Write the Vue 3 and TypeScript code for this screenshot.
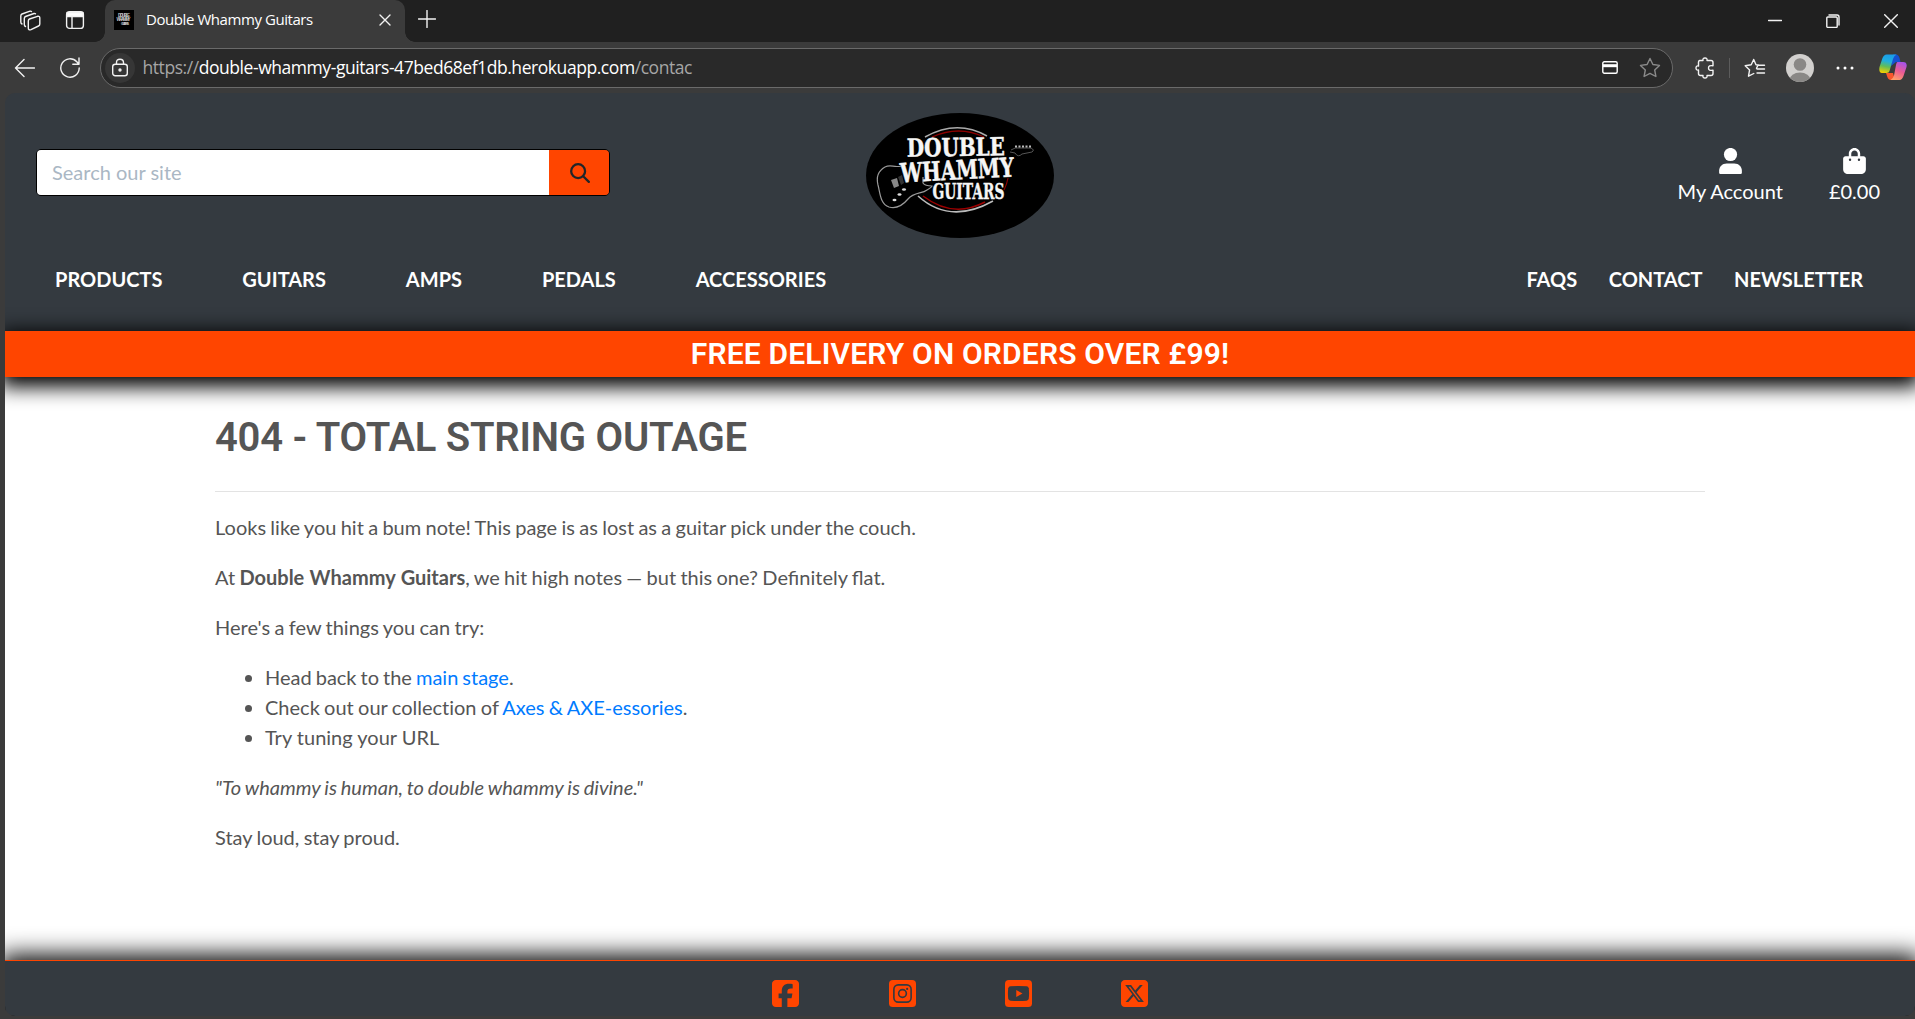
<script setup lang="ts">
interface NavItem { label: string }

const shopLinks: NavItem[] = [
  { label: 'PRODUCTS' },
  { label: 'GUITARS' },
  { label: 'AMPS' },
  { label: 'PEDALS' },
  { label: 'ACCESSORIES' },
]
const infoLinks: NavItem[] = [
  { label: 'FAQS' },
  { label: 'CONTACT' },
  { label: 'NEWSLETTER' },
]
</script>

<template>
  <div class="window">
    <div class="tabstrip">
      <svg class="ic workspaces" width="24" height="24" viewBox="0 0 24 24">
        <path d="M10.500 10 18.500 7.300Q20.800 6.800 20.800 9V15Q20.800 16.500 19.500 17L12 20.700Q9.300 21.500 9.300 19V12Q9.300 10.500 10.500 10Z" />
        <path d="M6.500 17.500Q5.300 17 5.300 15.500V9.500Q5.300 8 6.500 7.500L15 4.500Q16 4.300 16.500 4.800" />
        <path d="M3 15Q1.800 14.500 1.800 13V7Q1.800 5.500 3 5L11 2.200Q12 2 12.500 2.500" />
      </svg>
      <svg class="ic vtabs" width="20" height="20" viewBox="0 0 20 20">
        <rect x="1.600" y="1.600" width="16.800" height="16.800" rx="3" />
        <path d="M2 2.500H18V6.500H2Z" fill="#fff" /><path d="M7 6V18" />
      </svg>
      <div class="tab">
        <svg class="favicon" width="20" height="20" viewBox="0 0 20 20">
          <rect width="20" height="20" fill="#000" />
          <g fill="#c8c8c8" font-family="Liberation Sans, sans-serif" font-weight="700" text-anchor="middle">
            <text x="10" y="7" font-size="4.500" textLength="12">DOUBLE</text>
            <text x="9.500" y="11" font-size="4.500" textLength="14">WHAMMY</text>
            <text x="11" y="14.500" font-size="3.500" textLength="8">GUITARS</text>
          </g>
        </svg>
        <span class="tab-title">Double Whammy Guitars</span>
        <svg class="ic" width="12" height="12" viewBox="0 0 12 12"><path d="M1 1 11 11M11 1 1 11" /></svg>
      </div>
      <svg class="ic plus" width="18" height="18" viewBox="0 0 18 18"><path d="M9 .5V17.500M.5 9H17.500" /></svg>
      <div class="controls">
        <svg class="ic" width="14" height="14" viewBox="0 0 14 14"><path d="M.5 6.500H13.500" /></svg>
        <svg class="ic" width="14" height="14" viewBox="0 0 14 14">
          <rect x=".8" y="3" width="10.400" height="10.400" rx="1" /><path d="M3 1H11Q13 1 13 3V11" />
        </svg>
        <svg class="ic" width="14" height="14" viewBox="0 0 14 14"><path d="M.7.7 13.300 13.300M13.300.7.7 13.300" /></svg>
      </div>
    </div>

    <div class="toolbar">
      <svg class="ic back" width="21" height="20" viewBox="0 0 21 20"><path d="M10 1.500 1.500 10 10 18.500M1.500 10H20.500" /></svg>
      <svg class="ic reload" width="22" height="22" viewBox="0 0 22 22">
        <path d="M20.200 11A9.200 9.200 0 1 1 17.800 4.800L19.700 7M20 1V7.200H13.800" />
      </svg>
      <div class="address">
        <span class="lock">
          <svg class="ic" width="18" height="20" viewBox="0 0 18 20">
            <rect x="1.700" y="6.200" width="14.600" height="11.600" rx="2.500" />
            <path d="M5.500 6V4.500Q5.500 1.200 9 1.200T12.500 4.500V6" /><circle cx="9" cy="12" r="1" fill="#fff" />
          </svg>
        </span>
        <span class="url">https://<b>double-whammy-guitars-47bed68ef1db.herokuapp.com</b>/contac</span>
        <svg class="card" width="16" height="13" viewBox="0 0 16 13">
          <rect x=".8" y=".8" width="14.400" height="11.400" rx="1.500" fill="none" stroke="#fff" stroke-width="1.400" />
          <path d="M1 3.200H15V6.200H1Z" fill="#fff" />
        </svg>
        <svg class="star" width="22" height="21" viewBox="0 0 22 21">
          <path d="M11 1.500 13.900 7.500 20.500 8.400 15.700 13 16.900 19.500 11 16.400 5.100 19.500 6.300 13 1.500 8.400 8.100 7.500Z" />
        </svg>
      </div>
      <svg class="ic puzzle" width="20" height="22" viewBox="0 0 20 22">
        <path d="M4.500 3.500H8Q7.500 1 10 1T12 3.500H16Q18 3.500 18 5.500V8.800Q13.500 8 13.500 11T18 13.200V16.500Q18 18.500 16 18.500H12Q12.500 21 10 21T8 18.500H5.500Q3.500 18.500 3.500 16.500V13Q1 13.500 1 11T3.500 9V5Q3.500 3.500 5 3.500" />
      </svg>
      <span class="divider"></span>
      <svg class="ic favs" width="22" height="20" viewBox="0 0 22 20">
        <path d="M14.500 7 12 6.700 9.700 1.500 7.200 6.700 1.200 7.700 5.600 11.900 4.500 18.200 9.800 15.500M12.500 10.300 14 7.300H20.500M13 11H20.500M13 15H20.500" />
      </svg>
      <svg class="avatar" width="28" height="28" viewBox="0 0 28 28">
        <defs><clipPath id="face"><circle cx="14" cy="14" r="14" /></clipPath></defs>
        <g clip-path="url(#face)">
          <rect width="28" height="28" fill="#d2d0ce" /><circle cx="14" cy="10.500" r="6.300" fill="#8a8886" />
          <ellipse cx="14" cy="26" rx="10.500" ry="7.500" fill="#8a8886" />
        </g>
      </svg>
      <svg class="dots" width="18" height="4" viewBox="0 0 18 4" fill="#fff"><circle cx="2" cy="2" r="1.500" /><circle cx="9" cy="2" r="1.500" /><circle cx="16" cy="2" r="1.500" /></svg>
      <svg class="copilot" width="28" height="27" viewBox="0 0 28 27">
        <defs>
          <linearGradient id="cpA" x1=".5" y1="0" x2=".3" y2="1">
            <stop offset="0" stop-color="#1b9de8" /><stop offset=".35" stop-color="#20aee0" />
            <stop offset=".65" stop-color="#62bd58" /><stop offset="1" stop-color="#f5d000" />
          </linearGradient>
          <linearGradient id="cpB" x1=".7" y1="0" x2=".3" y2="1">
            <stop offset="0" stop-color="#a653e8" /><stop offset=".5" stop-color="#ec5c92" /><stop offset="1" stop-color="#ffa06a" />
          </linearGradient>
        </defs>
        <path d="M14 .5H17Q19.500.5 20.500 4L21.500 8H17L12 12Z" fill="#1550d0" />
        <path d="M7 19H14L16 26H12Q9 26 8 22Z" fill="#f9572c" />
        <path d="M7.500.5H17.500Q15 1.500 14 5L10.500 17Q10 19 7.500 19H3Q-.5 18.500.5 13L3.500 4Q5 .5 7.500.5Z" fill="url(#cpA)" />
        <path d="M18.500 8H24Q28.500 8 27.500 13L24.500 22Q23 26 20.500 26H11.500Q14 25 15 21.500L17 11Q17.500 8 18.500 8Z" fill="url(#cpB)" />
      </svg>
    </div>

    <div class="page">
      <header class="header">
        <div class="header-top">
          <form class="search">
            <input type="text" placeholder="Search our site" />
            <button type="button" aria-label="Search">
              <svg width="20" height="20" viewBox="0 0 512 512" fill="none" stroke="#212529" stroke-width="58" stroke-linecap="round"><circle cx="208" cy="208" r="178" /><path d="M338 338 482 482" /></svg>
            </button>
          </form>
          <svg class="logo" width="188" height="125" viewBox="0 0 188 125">
            <ellipse cx="94" cy="62.500" rx="94" ry="62.500" fill="#000" />
            <g fill="none" stroke-linecap="butt">
              <path d="M59 24Q91 6 121 23" stroke="#aaa" stroke-width="1.500" />
              <path d="M66 24Q93 12 118 24" stroke="#8b0000" stroke-width="1.300" />
              <path d="M52 83Q84 112 127 88" stroke="#bbb" stroke-width="1.600" />
              <path d="M57 83Q87 106 119 89" stroke="#9b0000" stroke-width="1.500" />
              <path d="M142 65Q141 71 138 77" stroke="#8b0000" stroke-width="1.200" />
              <path d="M35 53C28 55 25 51 19 54C12 58 10 64 12 72C14 79 14 91 23 94C30 96 37 92 42 86C48 79 56 81 61 77Q66 74 66 73Q59 73 57 70L57 64" stroke="#999" stroke-width="1.200" />
              <path d="M145 37Q149 34 154 35L165 35Q169 37 166 39L156 41Q152 45 149 40L144 39" stroke="#555" stroke-width="1" />
              <path d="M149 33.500H165" stroke="#bbb" stroke-width="1.800" stroke-dasharray="2 1.500" />
            </g>
            <path d="M25 67 31 65 33 73 28 75Z" fill="#888" /><path d="M32 64 36 62 38 70 35 72Z" fill="#333" />
            <g fill="#ddd"><ellipse cx="28.500" cy="87" rx="2" ry="1.300" /><ellipse cx="33.500" cy="81.500" rx="2" ry="1.300" /><ellipse cx="38" cy="76.500" rx="2" ry="1.300" /></g>
            <g fill="#f6f6f6" stroke="#f6f6f6" font-family="'DejaVu Serif Condensed', 'DejaVu Serif', serif" font-weight="700">
              <text x="41" y="43" font-size="25" stroke-width=".5" textLength="98" lengthAdjust="spacingAndGlyphs" transform="rotate(-1 90 40)">DOUBLE</text>
              <text x="34" y="66.500" font-size="26.500" stroke-width=".5" textLength="114" lengthAdjust="spacingAndGlyphs" transform="rotate(-3 90 60)">WHAMMY</text>
              <text x="66.500" y="86" font-size="21.500" stroke-width=".4" textLength="72" lengthAdjust="spacingAndGlyphs">GUITARS</text>
            </g>
          </svg>
          <div class="account">
            <a class="acct">
              <svg width="23" height="26" viewBox="0 0 448 512" fill="#fff"><circle cx="224" cy="128" r="130" /><path d="M150 304H298C390 304 448 370 448 450V485Q448 512 421 512H27Q0 512 0 485V450C0 370 58 304 150 304Z" /></svg>
              <span>My Account</span>
            </a>
            <a class="acct">
              <svg width="23" height="26" viewBox="0 0 448 512" fill="#fff"><path d="M160 112c0-35.300 28.700-64 64-64s64 28.700 64 64v48H160V112zm-48 48H48c-26.500 0-48 21.500-48 48V416c0 53 43 96 96 96H352c53 0 96-43 96-96V208c0-26.500-21.500-48-48-48H336V112C336 50.100 285.900 0 224 0S112 50.100 112 112v48zm24 48a24 24 0 1 1 0 48 24 24 0 1 1 0-48zm152 24a24 24 0 1 1 48 0 24 24 0 1 1 -48 0z" /></svg>
              <span>£0.00</span>
            </a>
          </div>
        </div>
        <nav class="nav">
          <div class="shop"><a v-for="l in shopLinks" :key="l.label">{{ l.label }}</a></div>
          <div class="info"><a v-for="l in infoLinks" :key="l.label">{{ l.label }}</a></div>
        </nav>
      </header>

      <div class="banner"><h4>FREE DELIVERY ON ORDERS OVER £99!</h4></div>

      <main class="content">
        <h2>404 - TOTAL STRING OUTAGE</h2>
        <hr />
        <p>Looks like you hit a bum note! This page is as lost as a guitar pick under the couch.</p>
        <p>At <strong>Double Whammy Guitars</strong>, we hit high notes — but this one? Definitely flat.</p>
        <p>Here's a few things you can try:</p>
        <ul>
          <li class="stage">Head back to the <a>main stage</a>.</li>
          <li>Check out our collection of <a>Axes &amp; AXE-essories</a>.</li>
          <li class="tuning">Try tuning your URL</li>
        </ul>
        <p><em>"To whammy is human, to double whammy is divine."</em></p>
        <p>Stay loud, stay proud.</p>
      </main>

      <footer class="footer">
        <svg width="27" height="31" viewBox="0 0 448 512"><path d="M64 32C28.700 32 0 60.700 0 96V416c0 35.300 28.700 64 64 64h98.200V334.200H109.400V256h52.800V222.300c0-87.100 39.400-127.500 125-127.500c16.200 0 44.200 3.200 55.700 6.400V172c-6-.6-16.500-1-29.600-1c-42 0-58.200 15.900-58.200 57.200V256h83.600l-14.400 78.200H255V480H384c35.300 0 64-28.700 64-64V96c0-35.300-28.700-64-64-64H64z" /></svg>
        <svg width="27" height="31" viewBox="0 0 448 512">
          <rect y="32" width="448" height="448" rx="64" />
          <g fill="none" stroke="#343a40" stroke-width="27"><rect x="81" y="113" width="286" height="286" rx="72" /><circle cx="224" cy="256" r="64" /></g>
          <circle cx="301" cy="180" r="18" fill="#343a40" />
        </svg>
        <svg width="27" height="31" viewBox="0 0 448 512">
          <rect y="32" width="448" height="448" rx="64" />
          <path d="M90 137Q224 125 358 137Q388 141 394 170Q405 256 394 342Q388 371 358 375Q224 387 90 375Q60 371 54 342Q43 256 54 170Q60 141 90 137Z" fill="#343a40" />
          <path d="M187 196 290 256 187 316Z" />
        </svg>
        <svg width="27" height="31" viewBox="0 0 448 512"><path d="M64 32C28.700 32 0 60.700 0 96V416c0 35.300 28.700 64 64 64H384c35.300 0 64-28.700 64-64V96c0-35.300-28.700-64-64-64H64zm297.100 84L257.300 234.600 379.400 396H283.800L209 298.100 123.300 396H75.800l111-126.900L69.700 116h98l67.700 89.500L313.600 116h47.500zM323.300 367.600L153.400 142.900H125.100L296.900 367.600h26.300z" /></svg>
      </footer>
    </div>
  </div>
</template>

<style>
body { margin: 0; overflow: hidden; background: #3b3b3b; }
</style>

<style scoped>
* { box-sizing: border-box; }
.window { width: 1915px; height: 1019px; background: #3b3b3b; font-family: Lato, sans-serif; overflow: hidden; }
svg { flex: none; display: block; }
.ic { fill: none; stroke: #f2f2f2; stroke-width: 1.4; stroke-linecap: round; stroke-linejoin: round; }

.tabstrip { display: flex; align-items: flex-start; height: 42px; background: #202020; }
.workspaces { margin: 9px 0 0 19px; }
.vtabs { margin: 10px 0 0 22px; }
.tab { display: flex; align-items: center; position: relative; width: 300px; height: 42px; margin-left: 20px; padding: 0 14px 3px 9px; background: #3b3b3b; border-radius: 10px 10px 0 0; }
.tab::before, .tab::after { content: ''; position: absolute; bottom: 0; width: 10px; height: 10px; }
.tab::before { left: -10px; background: radial-gradient(circle at 0 0, #202020 9.5px, #3b3b3b 10px); }
.tab::after { right: -10px; background: radial-gradient(circle at 100% 0, #202020 9.5px, #3b3b3b 10px); }
.tab-title { flex: 1; margin-left: 12px; padding-bottom: 1px; color: #fff; font: 15px/20px 'Open Sans', sans-serif; letter-spacing: -0.43px; white-space: nowrap; }
.plus { margin: 10px 0 0 13px; }
.controls { display: flex; gap: 44px; margin: 14px 17px 0 auto; }

.toolbar { display: flex; align-items: center; height: 51px; }
.back { margin-left: 14px; }
.reload { margin-left: 24px; }
.address { display: flex; align-items: center; width: 1573px; height: 40px; margin-left: 19px; background: #292929; border: 1px solid #6a6a6a; border-radius: 20px; }
.lock { display: flex; align-items: center; justify-content: center; width: 30px; height: 30px; margin-left: 4px; background: #363636; border-radius: 50%; }
.url { flex: 1; margin-left: 7.500px; padding-bottom: 1px; color: #a6a6a6; font: 17.5px/24px 'Open Sans', sans-serif; letter-spacing: -0.44px; white-space: nowrap; }
.url b { color: #fff; font-weight: 400; }
.card { margin-right: 21px; }
.star { margin-right: 11px; fill: none; stroke: #8a8a8a; stroke-width: 1.4; stroke-linejoin: round; }
.puzzle { margin-left: 22px; }
.divider { width: 1px; height: 20px; margin-left: 14px; background: #5c5c5c; }
.favs { margin-left: 14px; }
.avatar { margin-left: 20px; }
.dots { margin-left: 22px; }
.copilot { margin-left: 25px; }

.page { display: flex; flex-direction: column; width: 1910px; height: 923px; margin-left: 5px; border-radius: 10px; overflow: hidden; color: #555; }
.header { height: 238px; background: #343a40; }
.header-top { display: grid; grid-template-columns: 1fr 188px 1fr; height: 145px; padding: 20px 35px 0 31px; }
.search { display: flex; width: 574px; height: 47px; margin-top: 36px; border: 1px solid #000; border-radius: 5px; overflow: hidden; }
.search input { flex: 1; min-width: 0; padding: 0 15px 2px; border: 0; outline: 0; background: #fff; font: 20px/30px Lato, sans-serif; }
.search input::placeholder { color: #aab7c4; opacity: 1; }
.search button { display: flex; align-items: center; justify-content: center; width: 60px; border: 0; padding: 0 0 0 2px; background: #ff4500; }
.logo { margin-left: 2px; }
.account { display: flex; justify-content: flex-end; gap: 46px; padding-top: 35px; color: #fff; font-size: 20px; line-height: 30px; }
.acct { display: flex; flex-direction: column; align-items: center; gap: 2px; }
.nav { display: flex; justify-content: space-between; padding: 26px 52px 0 50px; color: #fff; font-size: 20px; line-height: 30px; font-weight: 700; }
.shop { display: flex; gap: 79.900px; }
.info { display: flex; gap: 31.500px; }
.banner { position: relative; height: 46px; background: #ff4500; box-shadow: 0 5px 20px 5px #000; color: #fff; text-align: center; }
.banner h4 { margin: 0; font: 600 30px/46px Roboto, sans-serif; letter-spacing: 0.18px; }
.content { flex: 1; padding: 37px 210px 0; background: #fff; font-size: 20px; line-height: 30px; word-spacing: -0.8px; }
.content h2 { margin: 0; font: 600 40px/48px Roboto, sans-serif; letter-spacing: -0.23px; word-spacing: 0; }
.content hr { height: 1px; margin: 29px 0 20px; border: 0; background: #e3e3e3; }
.content p { margin: 0 0 20px; }
.content ul { margin: 0 0 20px; padding-left: 50px; font-variant-ligatures: none; }
.content strong { word-spacing: 0.6px; }
.content .stage { word-spacing: -1.1px; }
.content .tuning { word-spacing: 0; }
.content a { color: #007bff; }
.footer { position: relative; display: flex; justify-content: center; gap: 89.300px; height: 56px; padding: 17px 0 0 0.500px; background: #343a40; border-top: 1px solid #ff4500; box-shadow: 0 0 25px 5px #000; fill: #ff4500; }
</style>
